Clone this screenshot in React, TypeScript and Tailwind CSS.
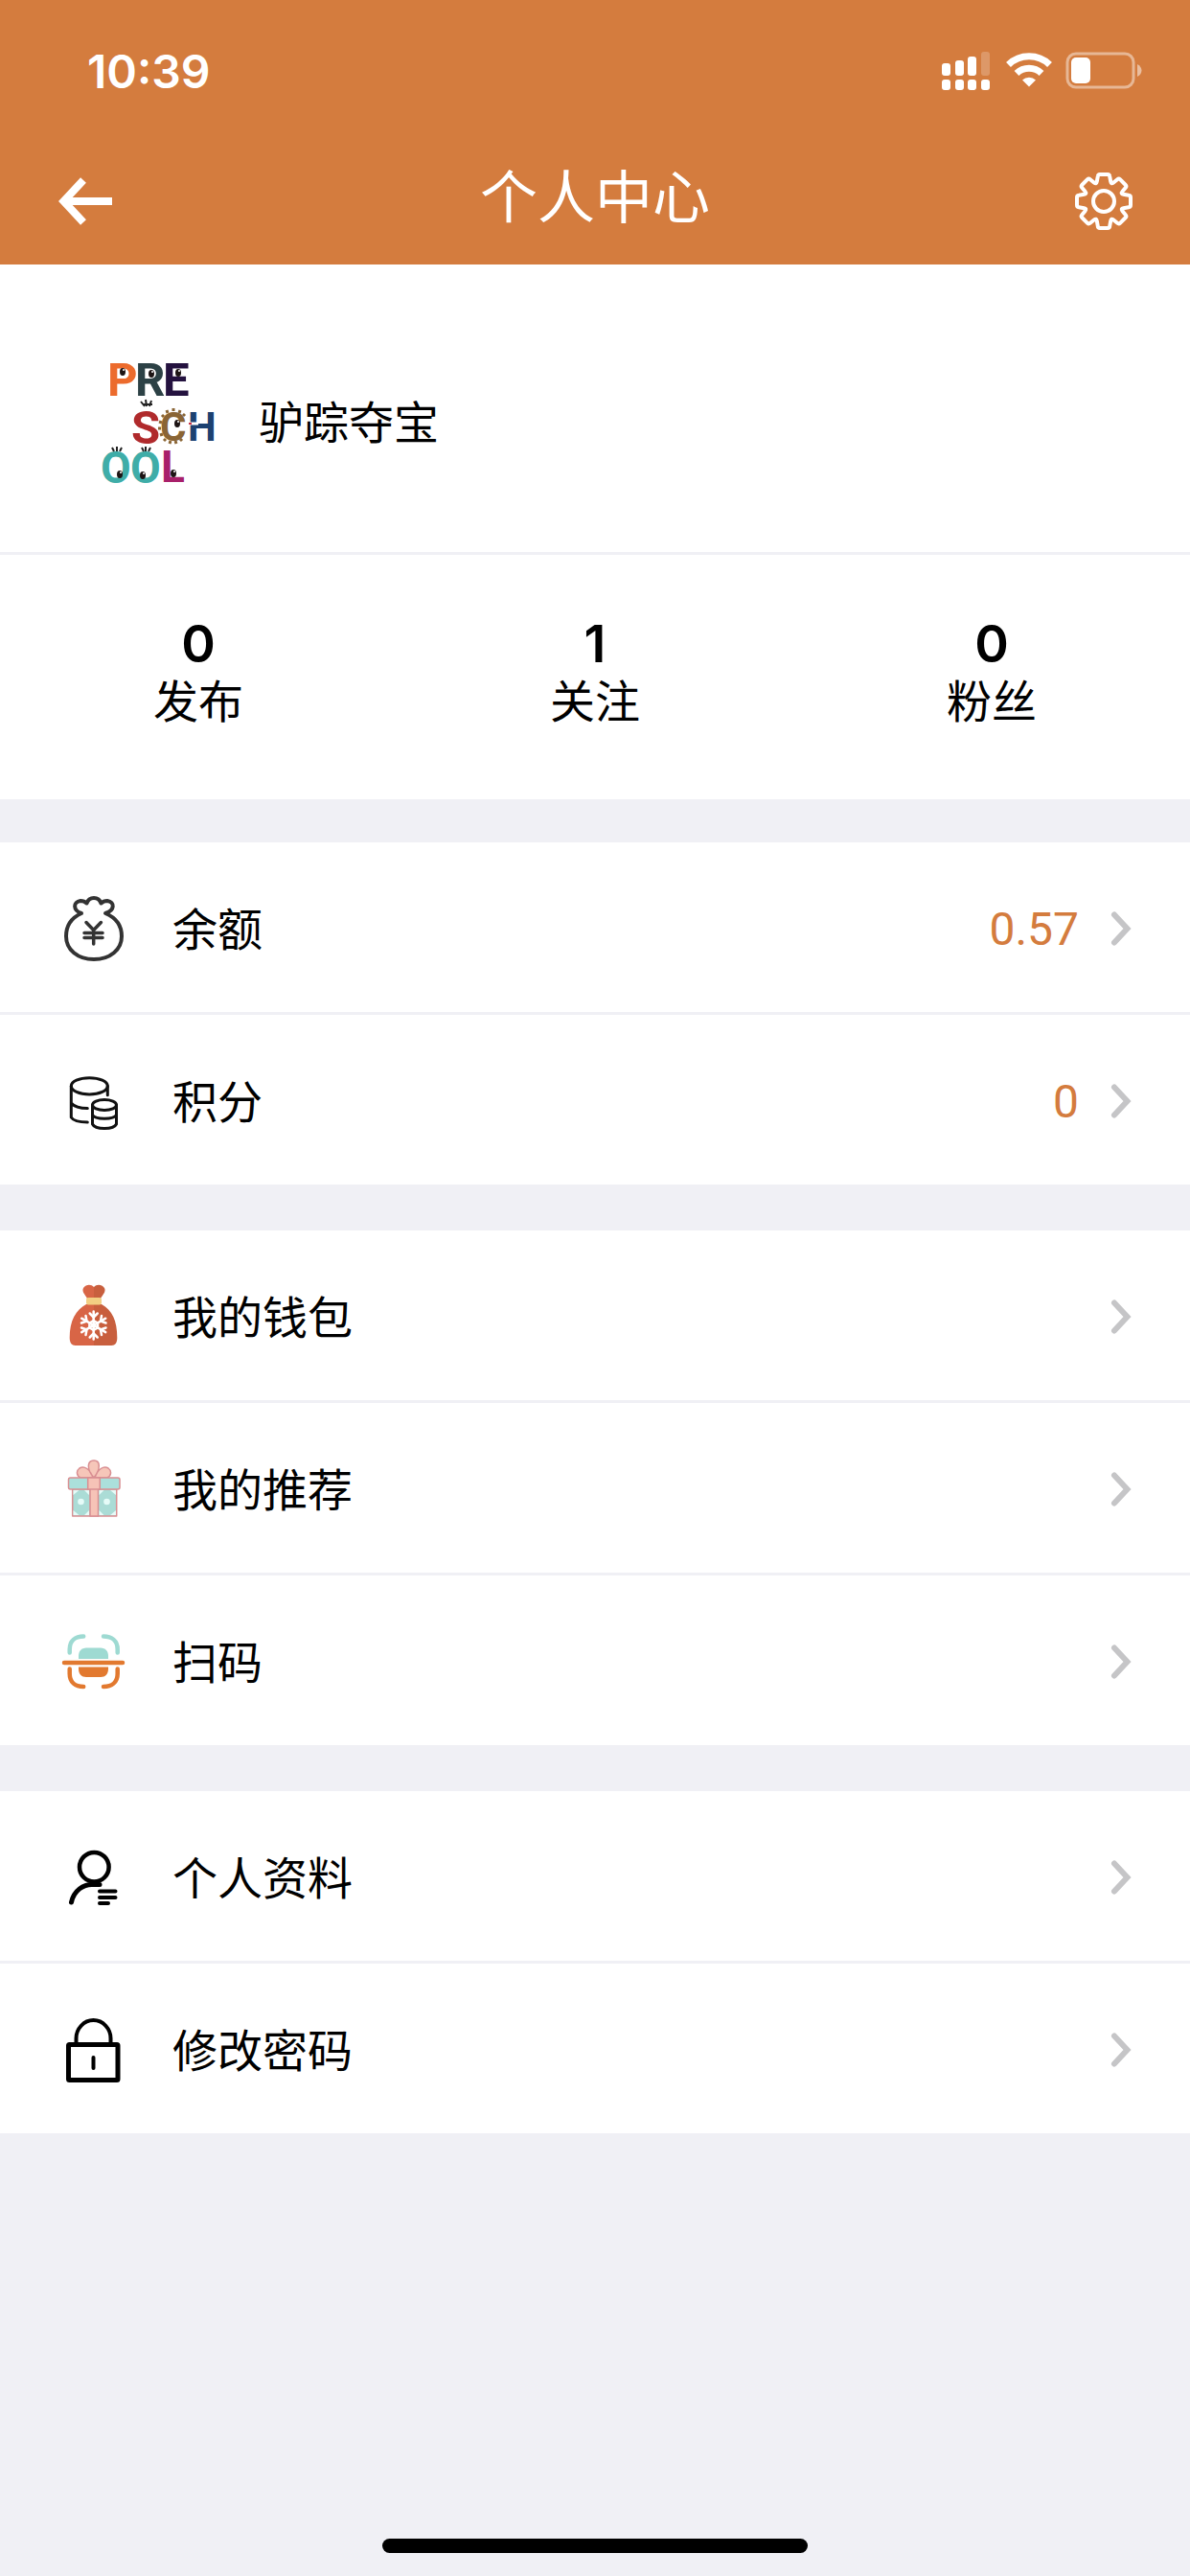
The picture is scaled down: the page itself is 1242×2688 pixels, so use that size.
import React from 'react';

const StatusIcons = () => (
  <svg width="210" height="42" viewBox="0 0 210 42" fill="#fff" aria-hidden="true">
    {/* dual sim signal */}
    <rect x="1" y="13" width="9" height="13" rx="3" />
    <rect x="15" y="10" width="9" height="16" rx="3" />
    <rect x="28" y="6" width="9" height="20" rx="3" />
    <rect x="42" y="1" width="9" height="25" rx="3" opacity="0.22" />
    <rect x="1" y="30" width="9" height="11" rx="3" />
    <rect x="15" y="30" width="9" height="11" rx="3" />
    <rect x="28" y="30" width="9" height="11" rx="3" />
    <rect x="42" y="30" width="9" height="11" rx="3" />
    {/* wifi */}
    <g fill="none" stroke="#fff" strokeWidth="7">
      <path d="M70.5 14.5a31 31 0 0 1 43 0" />
      <path d="M79 23.5a19 19 0 0 1 26 0" />
    </g>
    <path d="M85 30.5a10 10 0 0 1 14 0l-7 7z" />
    {/* battery */}
    <rect x="132" y="3" width="69" height="35" rx="9" fill="none" stroke="#fff" strokeWidth="3" opacity="0.45" />
    <rect x="136" y="7" width="20" height="27" rx="5" />
    <path d="M205 14c6 3 6 10 0 13z" opacity="0.5" />
  </svg>
);

const GearIcon = () => (
  <svg width="60" height="60" viewBox="0 0 60 60" fill="none" stroke="#fff" strokeWidth="4" strokeLinejoin="round" aria-hidden="true">
    <path d="M26 2h8q2 0 2.200 2l1 5.500q.5 3 3 1l4-3.300q1.500-1.200 2.800 0l5.800 5.800q1.200 1.300 0 2.800l-3.300 4q-2 2.500 1 3l5.500 1q2 .2 2 2.200v8q0 2-2 2.200l-5.500 1q-3 .5-1 3l3.300 4q1.200 1.500 0 2.800l-5.800 5.800q-1.300 1.200-2.800 0l-4-3.300q-2.500-2-3 1l-1 5.500q-.2 2-2.200 2h-8q-2 0-2.200-2l-1-5.500q-.5-3-3-1l-4 3.300q-1.500 1.200-2.800 0l-5.800-5.800q-1.200-1.300 0-2.800l3.300-4q2-2.500-1-3l-5.500-1q-2-.2-2-2.200v-8q0-2 2-2.200l5.500-1q3-.5 1-3l-3.300-4q-1.200-1.500 0-2.800l5.800-5.800q1.300-1.200 2.800 0l4 3.300q2.500 2 3-1l1-5.500q.2-2 2.200-2z" />
    <circle cx="30" cy="30" r="11" />
  </svg>
);

const BackIcon = () => (
  <svg width="60" height="60" viewBox="0 0 60 60" fill="none" stroke="#fff" strokeWidth="8" aria-hidden="true">
    <path d="M27 8 6.500 30 27 52M7 30h50" />
  </svg>
);

const Eye = ({ x, y }: { x: number; y: number }) => (
  <g>
    <ellipse cx={x} cy={y} rx="3" ry="4" fill="#1c1414" />
    <circle cx={x + 1} cy={y - 2} r="1" fill="#fff" />
  </g>
);

const Avatar = () => (
  <svg
    width="150"
    height="160"
    viewBox="0 0 150 160"
    role="img"
    aria-label="头像"
    className="font-['Roboto',sans-serif] font-bold"
  >
    <g fontSize="49">
      <text x="22" y="53" fill="#ec6b2d">P</text>
      <text x="51" y="53" fill="#2c4145">R</text>
      <text x="80" y="53" fill="#24123f">E</text>
      <text x="47" y="103" fill="#b02a2c">S</text>
    </g>
    <g fontSize="42">
      <text x="77" y="100" fill="#8a6535">C</text>
      <text x="106" y="100" fill="#1c4170">H</text>
    </g>
    <g fontSize="46">
      <text x="15" y="144" fill="#3fada8">O</text>
      <text x="46" y="144" fill="#3fada8">O</text>
      <text x="78" y="143" fill="#a8206a">L</text>
    </g>
    {/* cog teeth round the C */}
    <path d="M91 66v3M84 68l1 3M79 73l2 2M76 80l3 1M75 87h3M77 94l3-1M81 100l2-2M87 103l1-3M94 103l-1-3M100 100l-2-2M98 68l-1 3M103 72l-2 2" stroke="#8a6535" strokeWidth="3" />
    <path
      d="M27 107l2 4M32 106v5M37 107l-2 4M58 107l2 4M62 106v5M67 107l-2 4M57 59l4 5M62 57l1 7M68 58l-2 6M60 62h9"
      stroke="#222"
      strokeWidth="2"
    />
    <path d="M108 82h9" stroke="#fff" strokeWidth="3" />
    <path d="M107 82h3" stroke="#c8324a" strokeWidth="2" />
    <Eye x={38} y={28} />
    <Eye x={68} y={30} />
    <Eye x={96} y={29} />
    <Eye x={95} y={82} />
    <Eye x={35} y={135} />
    <Eye x={59} y={136} />
    <Eye x={91} y={134} />
  </svg>
);

const iconProps = {
  width: 72,
  height: 72,
  viewBox: '0 0 72 72',
  fill: 'none',
  strokeLinecap: 'round' as const,
  strokeLinejoin: 'round' as const,
  'aria-hidden': true,
  className: 'shrink-0',
};

const BalanceIcon = () => (
  <svg {...iconProps} stroke="#333" strokeWidth="4">
    <path d="M25 21C14 26 9 35 9 45c0 14 12 24 29 24s29-10 29-24c0-10-5-19-17-24 10-3 10-12 2-13-3 0-5 1-6.500 2.500C43 3 33 3 30.500 10.500 29 9 27 8 24 8c-8 1-8 10 1 13z" />
    <path d="M30 30.500l7.700 8 7.700-8M37.700 38.500V53M28 41.500h19M28 46.500h19" strokeWidth="3.500" />
  </svg>
);

const PointsIcon = () => (
  <svg {...iconProps} stroke="#111" strokeWidth="3">
    <ellipse cx="33.300" cy="21.300" rx="19" ry="8.600" />
    <path d="M14.300 21.300V54c2 3 9 5 17 5M14.300 39c3 3.500 9 5.500 17 5.500M52.300 21.300v9.500" />
    <ellipse cx="49" cy="41" rx="12.500" ry="5.500" />
    <path d="M36.500 41v20c3 6 22 6 25 0V41M36.500 51.500c3 5 22 5 25 0" />
  </svg>
);

const WalletIcon = () => (
  <svg {...iconProps}>
    <path d="M38 24h-8C19 30 12.700 41 12.700 59c0 5 2 8 6 8H38zM38 6c-3-3-8-3-11 1-2 4 2 7 4 11h7z" fill="#d86546" />
    <path d="M38 24h8c11 6 16.300 17 16.300 35 0 5-2 8-6 8H38zM38 6c3-3 8-3 11 1 2 4-2 7-4 11h-7z" fill="#c85f3e" />
    <rect x="30" y="17" width="16" height="7.500" rx="2" fill="#f3cf83" />
    <g stroke="#fff" strokeWidth="2.500">
      <path d="M37.700 31.500v29M25.200 38.700l25 14.500M25.200 53.200l25-14.500" />
      <path d="M33.700 33.500l4 4 4-4M33.700 58.500l4-4 4 4M25 43.500l5.500-2-1-5.500M50.500 48.500l-5.500 2 1 5.500M25 48.500l5.500 2-1 5.500M50.500 43.500l-5.500-2 1-5.500" />
      <path d="M37.700 41l4.300 2.500v5L37.700 51l-4.300-2.500v-5z" />
    </g>
  </svg>
);

const GiftIcon = () => (
  <svg {...iconProps} stroke="#d98f92" strokeWidth="1.500">
    <path d="M38 25c-8-9-7-18 0-18s7 9 0 18zM37 25c-3-9-9-13-14-10-4 3-3 8 1 10zM39 25c3-9 9-13 14-10 4 3 3 8-1 10z" fill="#f6c6b9" />
    <rect x="15.700" y="36.500" width="46" height="28.500" fill="#abdcd6" />
    <rect x="11.500" y="25" width="53.500" height="12" rx="2" fill="#abe0db" />
    <path d="M31.700 25h12.600v12H31.700zM34 37h8.500v28H34z" fill="#f6c3b7" />
    <g fill="#e6fbf8" stroke="none">
      <circle cx="24.500" cy="50" r="3.300" />
      <circle cx="51.500" cy="50" r="3.300" />
      <path d="M16.500 38h6l-6 5zM33 38h-5l5 5zM16.500 64h6l-6-5zM33 64h-5l5-5zM43.500 38h5l-5 5zM61 38h-6l6 5zM43.500 64h5l-5-5zM61 64h-6l6-5z" />
    </g>
  </svg>
);

const ScanIcon = () => (
  <svg {...iconProps} strokeWidth="4.500">
    <path d="M12.700 27.500V24c0-9 6-13.500 14.500-13.500M48 10.500c8.500 0 14.700 4.500 14.700 13.500v3.500" stroke="#9edad2" />
    <path d="M12.700 44.500v5c0 9 6 13.500 14.500 13.500M48 63c8.500 0 14.700-4.500 14.700-13.500v-5" stroke="#e2792f" />
    <path d="M22 34v-3c0-5 3-8.500 8-8.500h15c5 0 8 3.500 8 8.500v3z" fill="#9edad2" />
    <path d="M22 42.500h31v2c0 5-3 8.500-8 8.500H30c-5 0-8-3.500-8-8.500z" fill="#e2792f" />
    <path d="M7 38h61" stroke="#e2792f" />
  </svg>
);

const ProfileIcon = () => (
  <svg {...iconProps} stroke="#000" strokeWidth="4.500">
    <circle cx="38.300" cy="26.200" r="15.300" />
    <path d="M14.500 63C17 51 27 43.500 38 44.500h6" strokeWidth="5" />
    <path d="M44 51.500h16.500M44 58h16.500M44 64h9" strokeWidth="4" />
  </svg>
);

const LockIcon = () => (
  <svg {...iconProps} stroke="#000" strokeWidth="5">
    <rect x="11.500" y="31.500" width="51.500" height="37" rx="1" />
    <path d="M19.500 30v-5c0-10 8-19 18-19s18 9 18 19v5" strokeWidth="4" />
    <path d="M37.500 45v11" strokeWidth="4" />
  </svg>
);

const Chevron = () => (
  <svg width="24" height="42" viewBox="0 0 24 42" fill="none" stroke="#c5c5c7" strokeWidth="6" strokeLinecap="round" aria-hidden="true" className="shrink-0">
    <path d="M5 7.500 18.500 22 5 36.500" />
  </svg>
);

interface MenuItem {
  id: string;
  label: string;
  icon: React.ReactNode;
  value?: string;
}

const menuGroups: MenuItem[][] = [
  [
    { id: 'balance', label: '余额', icon: <BalanceIcon />, value: '0.57' },
    { id: 'points', label: '积分', icon: <PointsIcon />, value: '0' },
  ],
  [
    { id: 'wallet', label: '我的钱包', icon: <WalletIcon /> },
    { id: 'recommend', label: '我的推荐', icon: <GiftIcon /> },
    { id: 'scan', label: '扫码', icon: <ScanIcon /> },
  ],
  [
    { id: 'profile', label: '个人资料', icon: <ProfileIcon /> },
    { id: 'password', label: '修改密码', icon: <LockIcon /> },
  ],
];

const stats = [
  { label: '发布', count: 0 },
  { label: '关注', count: 1 },
  { label: '粉丝', count: 0 },
];

const MenuRow: React.FC<{ item: MenuItem }> = ({ item }) => (
  <li>
    <a href={`#${item.id}`} className="flex h-[177px] items-center px-15">
      {item.icon}
      <span className="ml-12 flex-1 pt-1">{item.label}</span>
      {item.value && <span className="mr-8 pt-1 font-['Roboto',sans-serif] text-[48px] text-[#d47c3e]">{item.value}</span>}
      <Chevron />
    </a>
  </li>
);

export default function App() {
  return (
    <div className="flex min-h-screen flex-col bg-[#f0f0f5] font-['Inter','Noto_Sans_CJK_SC',sans-serif] text-[47px] leading-[60px] text-black">
      <header className="bg-[#d47c3e] text-white">
        <div className="flex h-[148px] items-center justify-between pr-[50px] pl-[91px]">
          <span className="pt-px text-[48px] font-semibold">10:39</span>
          <StatusIcons />
        </div>
        <div className="flex h-32 items-center justify-between px-15 pb-1">
          <button type="button" aria-label="返回">
            <BackIcon />
          </button>
          <h1 className="pb-2 text-[60px]">个人中心</h1>
          <button type="button" aria-label="设置">
            <GearIcon />
          </button>
        </div>
      </header>

      <main>
        <section className="bg-white">
          <div className="flex items-center gap-[30px] border-b-3 border-[#f0f0f5] px-[90px] pt-[84px] pb-14">
            <Avatar />
            <span className="pt-0.5">驴踪夺宝</span>
          </div>
          <div className="grid grid-cols-3 pt-[63px] pb-[72px] text-center">
            {stats.map(stat => (
              <a key={stat.label} href="#stats" className="flex flex-col">
                <strong className="text-[54px] font-semibold">{stat.count}</strong>
                <span>{stat.label}</span>
              </a>
            ))}
          </div>
        </section>

        <nav className="mt-[45px] flex flex-col gap-12">
          {menuGroups.map((group, i) => (
            <ul key={i} className="divide-y-3 divide-[#f0f0f5] bg-white">
              {group.map(item => (
                <MenuRow key={item.id} item={item} />
              ))}
            </ul>
          ))}
        </nav>
      </main>

      <footer className="mt-auto flex justify-center pt-12 pb-6">
        <div className="h-[15px] w-[444px] rounded-full bg-black" />
      </footer>
    </div>
  );
}
